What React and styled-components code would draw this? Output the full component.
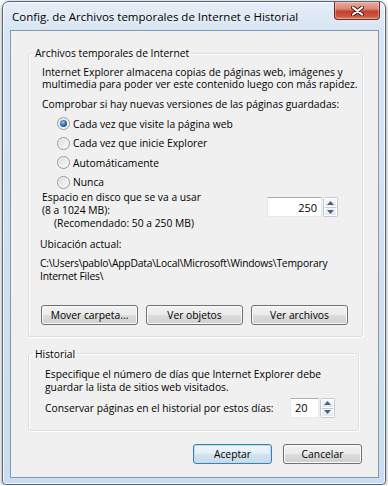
import React from "react";
import styled, { createGlobalStyle } from "styled-components";

const GlobalStyle = createGlobalStyle`
  html, body {
    margin: 0;
    padding: 0;
    background: #ffffff;
  }
  body {
    font-family: "Open Sans", "Liberation Sans", sans-serif;
    font-size: 10.3px;
    color: #000000;
  }
  * {
    box-sizing: border-box;
  }
`;

function Dialog() {
  return (
    <Window>
      <TitleBar>
        <Title>Config. de Archivos temporales de Internet e Historial</Title>
        <CloseButton>
          <svg width="13" height="10" viewBox="0 0 13 10">
            <path d="M2 1.5 L11 8.5 M11 1.5 L2 8.5" stroke="#4a1a14" strokeWidth="4" strokeLinecap="round" />
            <path d="M2 1.5 L11 8.5 M11 1.5 L2 8.5" stroke="#ffffff" strokeWidth="2.2" strokeLinecap="round" />
          </svg>
        </CloseButton>
      </TitleBar>
      <Client>
        <Group $width={335} $top={16} $bottom={11}>
          <Legend>Archivos temporales de Internet</Legend>
          <Body $indent={13} $right={14}>
            <Para $mt={6.5}>
              Internet Explorer almacena copias de páginas web, imágenes y
              <br />
              multimedia para poder ver este contenido luego con más rapidez.
            </Para>
            <Para $mt={7.5}>Comprobar si hay nuevas versiones de las páginas guardadas:</Para>
            <RadioList>
              <RadioRow>
                <RadioDot $checked />
                Cada vez que visite la página web
              </RadioRow>
              <RadioRow>
                <RadioDot />
                Cada vez que inicie Explorer
              </RadioRow>
              <RadioRow>
                <RadioDot />
                Automáticamente
              </RadioRow>
              <RadioRow>
                <RadioDot />
                Nunca
              </RadioRow>
            </RadioList>
            <DiskRow>
              <DiskText>
                Espacio en disco que se va a usar
                <br />
                (8 a 1024 MB):
                <Recommended>(Recomendado: 50 a 250 MB)</Recommended>
              </DiskText>
              <Spinner $mt={6.5} $mr={10}>
                <SpinInput $w={55} $align="flex-end">250</SpinInput>
                <SpinArrows />
              </Spinner>
            </DiskRow>
            <Para $mt={8.5} $ml={-2}>Ubicación actual:</Para>
            <Para $mt={6.5} $ml={-2} $tight>
              C:\Users\pablo\AppData\Local\Microsoft\Windows\Temporary
              <br />
              Internet Files\
            </Para>
            <ButtonRow>
              <Button $w={97}>Mover carpeta...</Button>
              <Button $w={97}>Ver objetos</Button>
              <Button $w={97}>Ver archivos</Button>
            </ButtonRow>
          </Body>
        </Group>
        <Group $width={331} $top={11} $bottom={12}>
          <Legend>Historial</Legend>
          <Body $indent={16} $right={0}>
            <Para $mt={8.5}>
              Especifique el número de días que Internet Explorer debe
              <br />
              guardar la lista de sitios web visitados.
            </Para>
            <DaysRow>
              <span>Conservar páginas en el historial por estos días:</span>
              <Spinner>
                <SpinInput $w={29} $align="flex-start">20</SpinInput>
                <SpinArrows />
              </Spinner>
            </DaysRow>
          </Body>
        </Group>
        <Footer>
          <Button $w={79} $default>Aceptar</Button>
          <Button $w={79}>Cancelar</Button>
        </Footer>
      </Client>
    </Window>
  );
}

function SpinArrows() {
  return (
    <SpinButtons>
      <SpinButton>
        <svg width="7" height="4" viewBox="0 0 7 4">
          <path d="M0 4 L3.5 0 L7 4 Z" fill="#4c5f86" />
        </svg>
      </SpinButton>
      <SpinButton>
        <svg width="7" height="4" viewBox="0 0 7 4">
          <path d="M0 0 L3.5 4 L7 0 Z" fill="#4c5f86" />
        </svg>
      </SpinButton>
    </SpinButtons>
  );
}

export default function App() {
  return (
    <>
      <GlobalStyle />
      <Dialog />
    </>
  );
}

const Window = styled.div`
  margin: 1px 0 0 2px;
  width: 384px;
  border: 1px solid #56677c;
  border-radius: 7px 7px 4px 4px;
  background: linear-gradient(to bottom, #e6eef8 0px, #d8e5f3 28px, #cadcef 100%);
  box-shadow: 0 1px 4px rgba(0, 0, 0, 0.45), inset 0 0 0 1px rgba(255, 255, 255, 0.75);
  padding: 0 6px 6px 7px;
`;

const TitleBar = styled.div`
  height: 28px;
  display: flex;
  justify-content: space-between;
  align-items: flex-start;
`;

const Title = styled.div`
  margin: 7px 0 0 2px;
  font-size: 11.5px;
  line-height: 16px;
  color: #000000;
  text-shadow: 0 0 6px rgba(255, 255, 255, 0.9);
`;

const CloseButton = styled.div`
  width: 46px;
  height: 18px;
  margin: 0 -1px 0 0;
  border: 1px solid #6e2a20;
  border-top: none;
  border-radius: 0 0 4px 4px;
  background: linear-gradient(to bottom, #e9ab9b 0%, #dc8a76 40%, #c6412c 55%, #cc5640 85%, #dc876f 100%);
  box-shadow: inset 0 0 0 1px rgba(255, 255, 255, 0.3);
  display: flex;
  align-items: center;
  justify-content: center;
`;

const Client = styled.div`
  border: 1px solid #8397b1;
  background: #f0f0f0;
  padding: 0 0 13px 0;
`;

const Group = styled.fieldset`
  margin: ${(p) => p.$top}px 0 0 17px;
  width: ${(p) => p.$width}px;
  min-width: 0;
  border: 1px solid #d5dfe5;
  border-radius: 3px;
  padding: 0 0 ${(p) => p.$bottom}px 0;
  box-shadow: inset 1px 1px 0 #ffffff, 1px 1px 0 #ffffff;
`;

const Legend = styled.legend`
  margin-left: 4px;
  padding: 0 2px;
  line-height: 12px;
  color: #000000;
`;

const Body = styled.div`
  padding: 0 ${(p) => p.$right}px 0 ${(p) => p.$indent}px;
`;

const Para = styled.div`
  margin-top: ${(p) => p.$mt || 0}px;
  margin-left: ${(p) => p.$ml || 0}px;
  line-height: 12.5px;
  white-space: nowrap;
  letter-spacing: ${(p) => (p.$tight ? "-0.2px" : "normal")};
`;

const RadioList = styled.div`
  margin-top: 7px;
  padding-left: 15px;
  display: flex;
  flex-direction: column;
  gap: 7.67px;
`;

const RadioRow = styled.div`
  height: 12px;
  line-height: 12px;
  display: flex;
  align-items: center;
  gap: 3px;
`;

const RadioDot = styled.span`
  width: 13px;
  height: 13px;
  flex-shrink: 0;
  border-radius: 50%;
  border: 1px solid #9a9a9a;
  background: linear-gradient(135deg, #d9d9d9 0%, #ececec 50%, #fafafa 100%);
  box-shadow: inset 0 0 0 1px #f4f4f4;
  display: flex;
  align-items: center;
  justify-content: center;

  &::after {
    content: "";
    width: 7px;
    height: 7px;
    border-radius: 50%;
    background: ${(p) =>
      p.$checked
        ? "radial-gradient(circle at 40% 35%, #9ccdf2 0%, #2f73b4 45%, #163a63 100%)"
        : "transparent"};
  }
`;

const DiskRow = styled.div`
  margin-top: 2.5px;
  display: flex;
  justify-content: space-between;
  align-items: flex-start;
`;

const DiskText = styled.div`
  line-height: 13px;
  white-space: nowrap;
`;

const Recommended = styled.div`
  padding-left: 12px;
`;

const Spinner = styled.div`
  margin-top: ${(p) => p.$mt || 0}px;
  margin-right: ${(p) => p.$mr || 0}px;
  display: flex;
  gap: 1px;
  height: 20px;
`;

const SpinInput = styled.div`
  width: ${(p) => p.$w}px;
  height: 20px;
  background: #ffffff;
  border: 1px solid #e3e9ef;
  border-top-color: #abadb3;
  padding: 0 4px;
  display: flex;
  align-items: center;
  justify-content: ${(p) => p.$align};
  font-size: 11px;
`;

const SpinButtons = styled.div`
  width: 15px;
  height: 20px;
  display: flex;
  flex-direction: column;
  border: 1px solid #c3cad4;
  border-radius: 2px;
  background: #ffffff;
`;

const SpinButton = styled.div`
  flex: 1;
  display: flex;
  align-items: center;
  justify-content: center;
  background: linear-gradient(to bottom, #f7f9fb, #e3e8ef);
  border: 1px solid #ffffff;
  & + & {
    border-top: 1px solid #c3cad4;
  }
`;

const ButtonRow = styled.div`
  margin: 22.5px 0 0 -1px;
  display: grid;
  grid-template-columns: repeat(3, 97px);
  gap: 8px;
`;

const Button = styled.button`
  width: ${(p) => p.$w}px;
  height: 20px;
  padding: 0;
  font: inherit;
  color: #000000;
  border: 1px solid ${(p) => (p.$default ? "#3c7fb1" : "#707070")};
  border-radius: 3px;
  background: ${(p) =>
    p.$default
      ? "linear-gradient(to bottom, #eef6fb 0%, #e3eef6 50%, #d3e2ee 50%, #c9dae7 100%)"
      : "linear-gradient(to bottom, #f2f2f2 0%, #ebebeb 50%, #dddddd 50%, #cfcfcf 100%)"};
  box-shadow: inset 0 0 0 1px ${(p) => (p.$default ? "#b8dcf2" : "#fbfbfb")};
`;

const DaysRow = styled.div`
  margin-top: 4.5px;
  display: grid;
  grid-template-columns: 245px auto;
  align-items: center;
  height: 20px;
  white-space: nowrap;
`;

const Footer = styled.div`
  margin-top: 13px;
  padding-right: 16px;
  display: flex;
  justify-content: flex-end;
  gap: 11px;
`;
